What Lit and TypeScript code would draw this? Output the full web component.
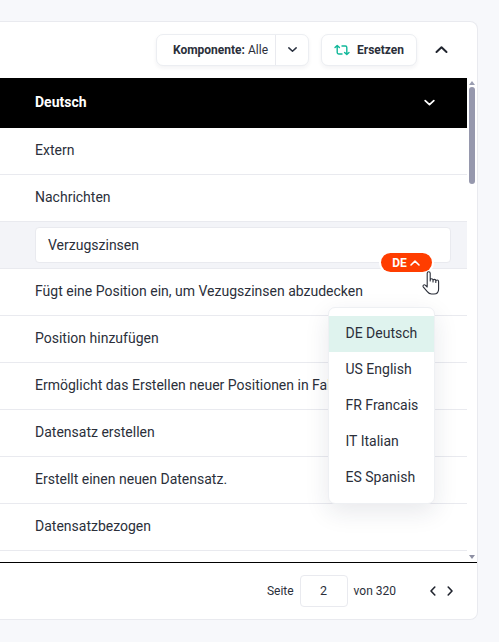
import { LitElement, html, css, svg } from "lit";
import { customElement } from "lit/decorators.js";

const chevron = (d: string) => html`<svg class="ic" viewBox="0 0 12 12" width="12" height="12"><path d=${d} fill="none" stroke="currentColor" stroke-width="1.6" stroke-linecap="round" stroke-linejoin="round"/></svg>`;
const DOWN = "M2 4.2 6 8l4-3.8";
const UP = "M2 8 6 4.2 10 8";

@customElement("app-root")
export class AppRoot extends LitElement {
  static styles = css`
    :host { display: block; height: 642px; background: #f7f8fb; font-family: Roboto, "Liberation Sans", sans-serif; font-size: 14px; color: #2b2f3a; box-sizing: border-box; padding: 21px 21px 22px 0; overflow: hidden; }
    * { box-sizing: border-box; }
    .card { height: 599px; background: #fff; border: 1px solid #e9eaef; border-left: none; border-radius: 0 8px 8px 0; display: flex; flex-direction: column; position: relative; }
    .toolbar { height: 56px; flex: none; display: flex; align-items: center; justify-content: flex-end; padding: 0 28px 1px 0; }
    .btn { height: 32px; background: #fff; border: 1px solid #eceef2; border-radius: 7px; box-shadow: 0 2px 4px rgba(30,40,70,.06); display: flex; align-items: center; font-size: 12px; }
    .comp { width: 153px; margin-right: 12px; }
    .comp .label { flex: 1; text-align: right; padding-right: 7px; white-space: nowrap; border-right: 1px solid #e9eaef; line-height: 30px; }
    .comp b { font-weight: 700; }
    .comp .arrow { width: 32px; display: flex; justify-content: center; color: #2b3240; }
    .comp .arrow .ic { width: 11px; height: 11px; }
    .rep { width: 96px; padding-left: 12px; gap: 7px; font-weight: 700; margin-right: 17px; }
    .up { display: flex; color: #20242e; }
    .up .ic { width: 15px; height: 15px; }
    .main { flex: none; height: 485px; display: flex; min-height: 0; border-bottom: 1px solid #000; }
    .rows { flex: 1; min-width: 0; overflow: hidden; }
    .bar { width: 10px; flex: none; display: flex; flex-direction: column; align-items: center; padding-top: 1px; }
    .tri-up { width: 0; height: 0; border: 3.5px solid transparent; border-top: 0; border-bottom: 4px solid #9a9db0; margin-top: 2px; }
    .thumb { width: 6px; height: 97px; background: #9698ad; border-radius: 3px; margin-top: 2px; }
    .gap { flex: 1; }
    .tri-down { width: 0; height: 0; border: 3.5px solid transparent; border-bottom: 0; border-top: 4px solid #8e90a3; margin-bottom: 3px; }
    .head { height: 50px; flex: none; background: #000; color: #fff; font-weight: 700; display: flex; align-items: center; justify-content: space-between; padding: 0 31px 2px 35px; }
    .head .ic { width: 13px; height: 13px; }
    .row { height: 47px; border-bottom: 1px solid #e9eaef; padding: 0 0 2px 35px; display: flex; align-items: center; white-space: nowrap; overflow: hidden; }
    .edit { background: #f3f4f8; padding: 0 16px 0 35px; align-items: center; position: relative; overflow: visible; }
    .input { width: 100%; height: 36px; background: #fff; border: 1px solid #e9eaef; border-radius: 4px; padding: 0 12px; display: flex; align-items: center; }
    .footer { flex: none; height: 56px; display: flex; align-items: center; justify-content: flex-end; font-size: 12px; padding: 0 21px 1px 0; }
    .page { width: 48px; height: 32px; border: 1px solid #e9eaef; border-radius: 4px; margin: 0 6px 0 6px; display: flex; align-items: center; justify-content: center; font-size: 12.5px; }
    .pager { display: flex; gap: 5px; margin-left: 31px; color: #20242e; }
    .badge { position: absolute; left: 381px; top: 31px; width: 51px; height: 19px; background: #ff3d00; color: #fff; font-size: 12px; font-weight: 700; border-radius: 10px; display: flex; align-items: center; justify-content: center; gap: 2px; box-shadow: 0 0 0 2px #fff; z-index: 3; }
    .badge .ic { width: 12px; height: 12px; }
    .hand { position: absolute; left: 420.5px; top: 248px; z-index: 4; }
    .menu { position: absolute; left: 328px; top: 285px; width: 107px; height: 197px; background: #fff; border: 1px solid #eef0f3; border-radius: 7px; padding: 8px 0; box-shadow: 0 8px 24px rgba(30,40,70,.1); z-index: 2; }
    .item { height: 36px; padding: 0 0 2px 16.5px; display: flex; align-items: center; }
    .item.on { background: #dff3ee; }
  `;

  render() {
    const before = ["Extern", "Nachrichten"];
    const after = [
      "Fügt eine Position ein, um Vezugszinsen abzudecken",
      "Position hinzufügen",
      "Ermöglicht das Erstellen neuer Positionen in Fakturen",
      "Datensatz erstellen",
      "Erstellt einen neuen Datensatz.",
      "Datensatzbezogen",
    ];
    const langs = ["DE Deutsch", "US English", "FR Francais", "IT Italian", "ES Spanish"];
    return html`
      <div class="card">
        <div class="toolbar">
          <div class="btn comp">
            <div class="label"><b>Komponente:</b> Alle</div>
            <div class="arrow">${chevron(DOWN)}</div>
          </div>
          <div class="btn rep">
            <svg width="16" height="12" viewBox="0 0 16 12" fill="none" stroke="#12b89a" stroke-width="1.4" stroke-linecap="round" stroke-linejoin="round">
              ${svg`<path d="M1 3.6 3.2 1.4 5.4 3.6M3.2 1.6V8.6a1.4 1.4 0 0 0 1.4 1.4H8"/><path d="M15 8.4 12.8 10.6 10.6 8.4M12.8 10.4V3.4A1.4 1.4 0 0 0 11.4 2H8"/>`}
            </svg>
            Ersetzen
          </div>
          <div class="up">${chevron(UP)}</div>
        </div>
        <div class="main">
          <div class="rows">
            <div class="head">Deutsch ${chevron(DOWN)}</div>
            ${before.map((t) => html`<div class="row">${t}</div>`)}
            <div class="row edit"><div class="input">Verzugszinsen</div>
              <div class="badge">DE ${chevron(UP)}</div>
            </div>
            ${after.map((t) => html`<div class="row">${t}</div>`)}
          </div>
          <div class="bar">
            <div class="tri-up"></div>
            <div class="thumb"></div>
            <div class="gap"></div>
            <div class="tri-down"></div>
          </div>
        </div>
        <div class="footer">
          Seite
          <div class="page">2</div>
          von 320
          <div class="pager">
            ${chevron("M7.8 2 4 6l3.8 4")}
            ${chevron("M4.2 2 8 6l-3.8 4")}
          </div>
        </div>
        <div class="menu">
          ${langs.map((l, i) => html`<div class="item ${i === 0 ? "on" : ""}">${l}</div>`)}
        </div>
        <svg class="hand" width="22" height="26" viewBox="0 0 22 26" fill="#fff" stroke="#2b2f3a" stroke-width="1.1" stroke-linejoin="round" stroke-linecap="round">
          <path d="M6.2 16.5V3.2a1.5 1.5 0 0 1 3 0V11M9.2 10.2a1.4 1.4 0 0 1 2.8 0V12M12 10.8a1.4 1.4 0 0 1 2.8 0V12.4M14.8 11.4a1.4 1.4 0 0 1 2.8 0V19c0 2.8-1.6 5-4.6 5H10.5c-2 0-3.2-1-4.2-2.3L2.2 16.8c-.9-1.3.9-2.8 2.1-1.6l1.9 1.8"/>
        </svg>
      </div>
    `;
  }
}
